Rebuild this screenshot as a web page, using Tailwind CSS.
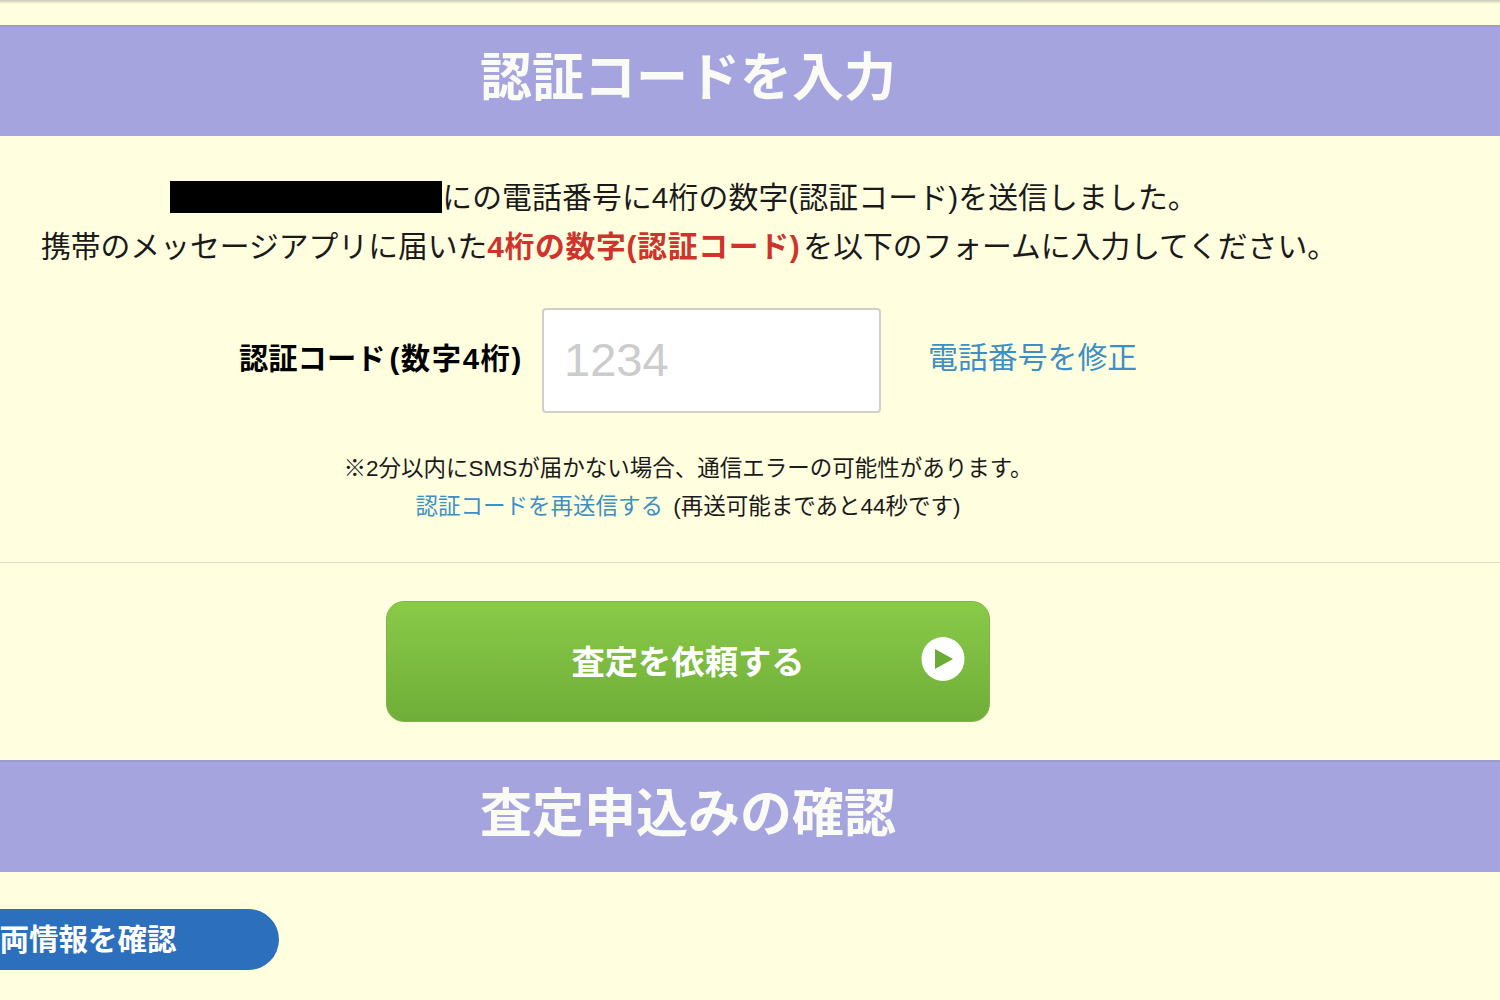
<!DOCTYPE html>
<html lang="ja">

<head>
  <meta charset="UTF-8" />
  <meta name="viewport" content="width=device-width, initial-scale=1.0" />
  <title>認証コードを入力</title>
  <script src="https://cdn.jsdelivr.net/npm/@tailwindcss/browser@4"></script>
</head>

<body class="h-[1000px] overflow-hidden bg-[#ffffe0] font-['Liberation_Sans','Noto_Sans_CJK_JP',sans-serif] text-[#1a1a1a]">
  <!-- Top edge -->
  <div class="h-[4px] bg-gradient-to-b from-[#c9c9b8] to-[#ffffe0]"></div>

  <!-- Code section -->
  <h2 class="mt-[21px] h-[111px] border-t-2 border-[#9c9bce] bg-[#a5a4de]">
    <div class="flex h-[101px] w-[1376px] items-center justify-center text-[52px] font-bold text-[#fbfbf6]">認証コードを入力</div>
  </h2>

  <div class="w-[1376px]">
    <div class="pt-[37px] text-center text-[29.8px] leading-[49px]">
      <p class="pr-[8px] tracking-[0.15px]"><span class="inline-block h-[32px] w-[272px] translate-y-[5px] bg-black align-baseline"></span>にの電話番号に4桁の数字(認証コード)を送信しました。</p>
      <p class="pl-[2px]">携帯のメッセージアプリに届いた<span class="mr-[3px] font-bold tracking-[0.7px] text-[#d0332b]">4桁の数字(認証コード)</span>を以下のフォームに入力してください。</p>
    </div>

    <!-- Code input row -->
    <div class="mt-[37px] flex items-center">
      <label for="code" class="ml-[239px] w-[303px] -translate-y-[2px] text-[29.3px] font-bold text-black">認証コード<span class="ml-[4px] tracking-[1.6px]">(数字4桁)</span></label>
      <input id="code" type="text" placeholder="1234" class="h-[105px] w-[339px] rounded-[4px] border-2 border-[#d0d0c8] bg-white px-[20px] pb-[2px] text-[47px] placeholder:text-[#cccccc] focus:outline-none" />
      <a href="#" class="ml-[47px] -translate-y-[2px] text-[29.9px] text-[#3d8fc4]">電話番号を修正</a>
    </div>

    <div class="mt-[37px] text-center text-[22.5px] leading-[38px]">
      <p>※2分以内にSMSが届かない場合、通信エラーの可能性があります。</p>
      <p><a href="#" class="text-[#3d8fc4]">認証コードを再送信する</a> <span class="ml-1">(再送可能まであと44秒です)</span></p>
    </div>
  </div>

  <hr class="mt-[36px] border-t border-[#dcdccf]" />

  <!-- Submit button -->
  <div class="mt-[38px] flex w-[1376px] justify-center">
    <button class="relative h-[121px] w-[604px] rounded-[18px] border border-[#7fb24a] bg-gradient-to-b from-[#8aca48] to-[#6fae38] pt-[2px] text-[33.3px] font-bold text-white">
      査定を依頼する
      <svg class="absolute top-[34px] right-[24px]" width="44" height="46" viewBox="0 0 44 46">
        <ellipse cx="22" cy="23" rx="21.5" ry="22" fill="#ffffff" />
        <path d="M14 13 L32 23 L14 33 Z" fill="#6cab36" />
      </svg>
    </button>
  </div>

  <!-- Confirm section -->
  <h2 class="mt-[38px] h-[112px] border-t-2 border-[#9c9bce] bg-[#a5a4de]">
    <div class="flex h-[103px] w-[1376px] items-center justify-center text-[52px] font-bold text-[#fbfbf6]">査定申込みの確認</div>
  </h2>

  <div class="mt-[37px] -ml-[60px] flex h-[61px] w-[339px] items-center rounded-r-full bg-[#2c6fbc] pt-[2px] pl-[30px] text-[29.5px] font-bold text-white">車両情報を確認</div>
</body>

</html>
